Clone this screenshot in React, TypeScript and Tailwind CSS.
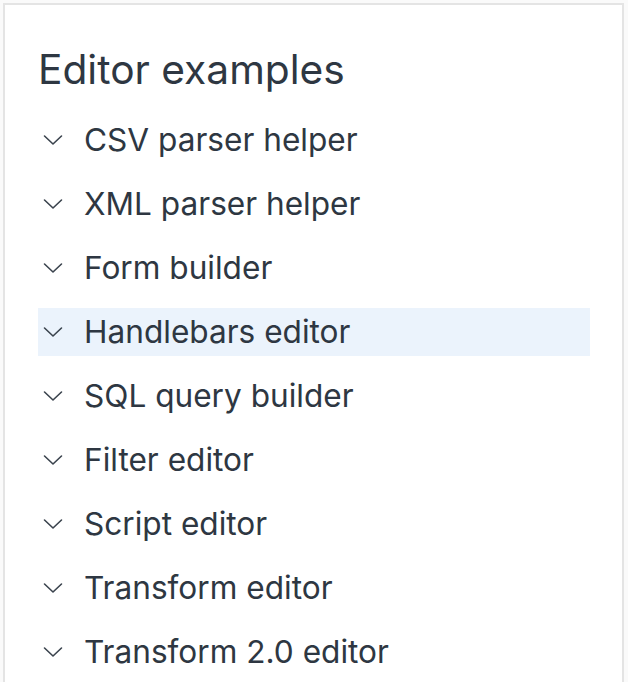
const examples = [
  "CSV parser helper",
  "XML parser helper",
  "Form builder",
  "Handlebars editor",
  "SQL query builder",
  "Filter editor",
  "Script editor",
  "Transform editor",
  "Transform 2.0 editor",
];

function Chevron() {
  return (
    <svg width="20" height="12" viewBox="0 0 20 12" fill="none" className="shrink-0">
      <polyline
        points="1.5,2 10,10 18.5,2"
        stroke="#3a434d"
        strokeWidth="1.6"
        strokeLinecap="round"
        strokeLinejoin="round"
      />
    </svg>
  );
}

export default function App() {
  return (
    <div className="h-[682px] overflow-hidden bg-[#fafafa] pl-[3px] pr-[4px] pt-[3px] font-['Inter',sans-serif] text-[#2e3742]">
      <div className="h-[720px] border-2 border-[#e4e4e4] bg-white pl-[33px] pr-[32px] pt-[36px]">
        <h2 className="text-[40.7px] leading-[58px] font-normal">Editor examples</h2>
        <ul className="mt-[17px] flex flex-col gap-[16px]">
          {examples.map((name) => (
            <li
              key={name}
              className={
                "flex h-[48px] items-center gap-[21px] pl-[5px] " +
                (name === "Handlebars editor" ? "bg-[#ebf3fc]" : "")
              }
            >
              <Chevron />
              <span className="text-[31.6px] leading-none">{name}</span>
            </li>
          ))}
        </ul>
      </div>
    </div>
  );
}
